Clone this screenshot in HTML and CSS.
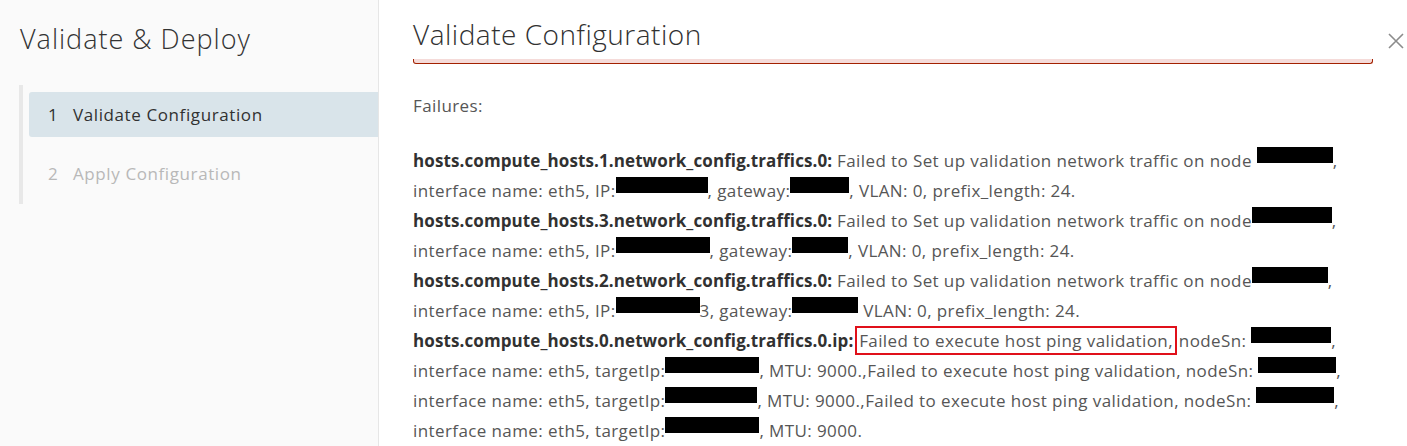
FILE: index.html
```html
<!DOCTYPE html>
<html lang="en">
<head>
<meta charset="utf-8">
<title>Validate &amp; Deploy</title>
<link rel="stylesheet" href="styles.css">
</head>
<body>
<div class="modal">
  <aside class="sidebar">
    <h2 class="side-title">Validate &amp; Deploy</h2>
    <nav class="steps">
      <div class="step active"><span class="num">1</span><span>Validate Configuration</span></div>
      <div class="step disabled"><span class="num">2</span><span>Apply Configuration</span></div>
    </nav>
  </aside>
  <main class="content">
    <header class="head">
      <h1 class="title">Validate Configuration</h1>
      <button class="close" aria-label="Close">
        <svg width="16" height="16" viewBox="0 0 16 16"><path d="M1 1 L15 15 M15 1 L1 15" stroke="#8c8c8c" stroke-width="1.6" fill="none"/></svg>
      </button>
    </header>
    <section class="body">
      <div class="alert"></div>
      <p class="label">Failures:</p>
      <div class="errors">
        <p><b>hosts.compute_hosts.1.network_config.traffics.0:</b> Failed to Set up validation network traffic on node <span class="rd w76"></span>,<br>interface name: eth5, IP:<span class="rd w92"></span>, gateway:<span class="rd w59"></span>, VLAN: 0, prefix_length: 24.</p>
        <p><b>hosts.compute_hosts.3.network_config.traffics.0:</b> Failed to Set up validation network traffic on node<span class="rd w80"></span>,<br>interface name: eth5, IP:<span class="rd w94"></span>, gateway:<span class="rd w56"></span>, VLAN: 0, prefix_length: 24.</p>
        <p><b>hosts.compute_hosts.2.network_config.traffics.0:</b> Failed to Set up validation network traffic on node<span class="rd w76"></span>,<br>interface name: eth5, IP:<span class="rd w84"></span>3, gateway:<span class="rd w66"></span> VLAN: 0, prefix_length: 24.</p>
        <p><b>hosts.compute_hosts.0.network_config.traffics.0.ip:</b> <span class="mark">Failed to execute host ping validation,</span> nodeSn: <span class="rd w80"></span>,<br>interface name: eth5, targetIp:<span class="rd w94"></span>, MTU: 9000.,Failed to execute host ping validation, nodeSn: <span class="rd w78"></span>,<br>interface name: eth5, targetIp:<span class="rd w92"></span>, MTU: 9000.,Failed to execute host ping validation, nodeSn: <span class="rd w78"></span>,<br>interface name: eth5, targetIp:<span class="rd w94"></span>, MTU: 9000.</p>
      </div>
    </section>
  </main>
</div>
</body>
</html>
```
FILE: styles.css
```css
* { box-sizing: border-box; }
html, body { margin: 0; padding: 0; }
body {
  font-family: "Open Sans", "Lato", sans-serif;
  background: #fff;
  color: #565656;
  width: 1407px;
  height: 446px;
  overflow: hidden;
}
.modal {
  display: flex;
  height: 446px;
}
.sidebar {
  width: 379px;
  flex: 0 0 379px;
  background: #fafafa;
  border-right: 1px solid #e6e6e6;
}
.side-title {
  margin: 0;
  padding: 22px 0 0 20px;
  font-size: 27px;
  line-height: 34px;
  font-weight: 300;
  letter-spacing: 1px;
  color: #333;
}
.steps {
  margin: 29px 0 0 19px;
  border-left: 4px solid #e8e8e8;
  padding: 7px 0 8px 6px;
  display: flex;
  flex-direction: column;
  gap: 14px;
}
.step {
  height: 45px;
  display: flex;
  align-items: center;
  padding-left: 19px;
  font-size: 17px;
  letter-spacing: 0.6px;
  border-radius: 3px 0 0 3px;
}
.step .num { width: 25px; }
.step.active {
  background: #d9e4ea;
  color: #313131;
}
.step.disabled { color: #b8b8b8; }
.content {
  flex: 1;
  padding: 16px 3px 0 34px;
  display: flex;
  flex-direction: column;
}
.head {
  display: flex;
  justify-content: space-between;
  align-items: flex-start;
  height: 46px;
}
.title {
  margin: 0;
  font-size: 28px;
  line-height: 36px;
  font-weight: 300;
  letter-spacing: 0.5px;
  color: #313131;
}
.close {
  border: 0;
  background: none;
  padding: 0;
  margin-top: 17px;
  width: 16px;
  height: 16px;
  cursor: pointer;
}
.close svg { display: block; }
.body {
  margin-right: 31px;
}
.alert {
  height: 5px;
  background: #f5dbd9;
  border: 1px solid #a32100;
  border-top: 0;
  border-radius: 0 0 3px 3px;
}
.label {
  margin: 27px 0 0;
  font-size: 17px;
  line-height: 30px;
  letter-spacing: 0.4px;
}
.errors {
  margin-top: 25px;
  font-size: 17px;
  line-height: 30px;
  letter-spacing: 0.4px;
}
.errors p { margin: 0; }
.errors b { color: #313131; font-weight: 700; letter-spacing: 0.1px; }
.rd {
  display: inline-block;
  height: 16px;
  background: #000;
  vertical-align: 4px;
}
.w56 { width: 56px; }
.w59 { width: 59px; }
.w66 { width: 66px; }
.w76 { width: 76px; }
.w78 { width: 78px; }
.w80 { width: 80px; }
.w84 { width: 84px; }
.w92 { width: 92px; }
.w94 { width: 94px; }
.mark {
  outline: 2px solid #e0101a;
  outline-offset: 1px;
  padding: 0 1px;
}
```
